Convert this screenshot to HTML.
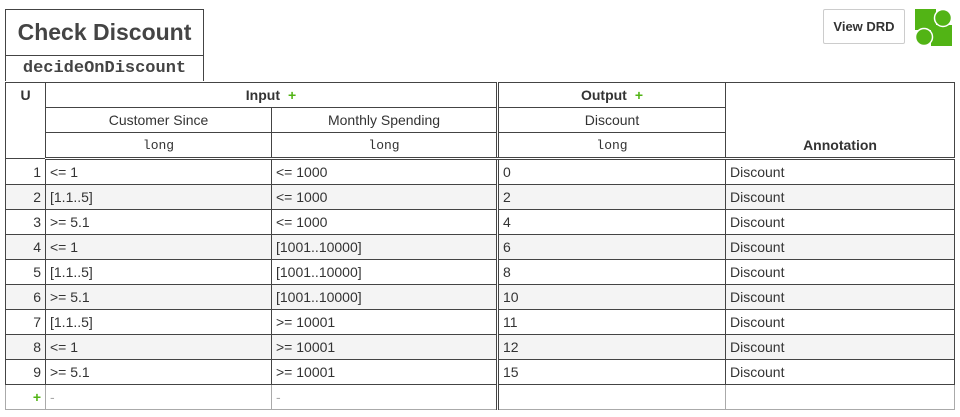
<!DOCTYPE html>
<html><head><style>
body{margin:0;width:960px;height:417px;background:#fff;font-family:"Liberation Sans",sans-serif;color:#333;position:relative;overflow:hidden}
.t1{position:absolute;left:5px;top:9px;width:197px;height:45px;border:1px solid #444;font-weight:bold;font-size:23px;line-height:45px;text-align:center;color:#444}
.t2{position:absolute;left:5px;top:55px;width:197px;height:26px;border:1px solid #444;border-top:none;border-bottom:none;font-family:"Liberation Mono",monospace;font-weight:bold;font-size:17px;line-height:28px;text-align:center;color:#444}
.btn{position:absolute;left:823px;top:9px;width:80px;height:33px;border:1px solid #ccc;border-radius:2px;font-weight:bold;font-size:13px;line-height:33px;text-align:center;color:#333}
table{position:absolute;left:5px;top:82px;width:949px;border-collapse:collapse;table-layout:fixed;font-size:14px}
td,th{border:1px solid #444;height:24px;padding:0 4px;white-space:nowrap;overflow:hidden}
th{font-weight:normal;text-align:center}
.b{font-weight:bold}
.m{font-family:"Liberation Mono",monospace;font-size:13px}
.dl{border-left:3px double #444}
.hb td,.hb th{border-bottom:3px double #444}
tbody tr:nth-child(even) td{background:#f4f4f4}
.n{text-align:right}
.p{color:#52b415;font-weight:bold;margin-left:8px}
.add td{border-color:#aaa;color:#aaa}
</style></head><body>
<div class="t1">Check Discount</div>
<div class="t2">decideOnDiscount</div>
<div class="btn">View DRD</div>
<svg style="position:absolute;left:915px;top:9px" width="37" height="37" viewBox="0 0 37 37">
<rect x="0" y="0" width="21" height="21" fill="#52b415"/>
<rect x="16" y="16" width="21" height="21" fill="#52b415"/>
<circle cx="28" cy="9" r="8.5" fill="#52b415" stroke="#fff" stroke-width="1.5"/>
<circle cx="9" cy="28" r="8.5" fill="#52b415" stroke="#fff" stroke-width="1.5"/>
</svg>
<table>
<colgroup><col style="width:40px"><col style="width:226px"><col style="width:226px"><col style="width:228px"><col style="width:229px"></colgroup>
<thead>
<tr><th rowspan="3" class="b" style="vertical-align:top;padding-top:4px">U</th><th colspan="2" class="b">Input<span class="p">+</span></th><th class="b dl">Output<span class="p">+</span></th><th rowspan="3" class="b" style="vertical-align:bottom;padding-bottom:4px;border-bottom:3px double #444">Annotation</th></tr>
<tr><th>Customer Since</th><th>Monthly Spending</th><th class="dl">Discount</th></tr>
<tr class="hb"><th class="m">long</th><th class="m">long</th><th class="m dl">long</th></tr>
</thead>
<tbody>
<tr><td class="n">1</td><td>&lt;= 1</td><td>&lt;= 1000</td><td class="dl">0</td><td>Discount</td></tr>
<tr><td class="n">2</td><td>[1.1..5]</td><td>&lt;= 1000</td><td class="dl">2</td><td>Discount</td></tr>
<tr><td class="n">3</td><td>&gt;= 5.1</td><td>&lt;= 1000</td><td class="dl">4</td><td>Discount</td></tr>
<tr><td class="n">4</td><td>&lt;= 1</td><td>[1001..10000]</td><td class="dl">6</td><td>Discount</td></tr>
<tr><td class="n">5</td><td>[1.1..5]</td><td>[1001..10000]</td><td class="dl">8</td><td>Discount</td></tr>
<tr><td class="n">6</td><td>&gt;= 5.1</td><td>[1001..10000]</td><td class="dl">10</td><td>Discount</td></tr>
<tr><td class="n">7</td><td>[1.1..5]</td><td>&gt;= 10001</td><td class="dl">11</td><td>Discount</td></tr>
<tr><td class="n">8</td><td>&lt;= 1</td><td>&gt;= 10001</td><td class="dl">12</td><td>Discount</td></tr>
<tr><td class="n">9</td><td>&gt;= 5.1</td><td>&gt;= 10001</td><td class="dl">15</td><td>Discount</td></tr>
<tr class="add"><td class="n" style="background:#fff"><span class="p" style="margin:0">+</span></td><td style="background:#fff">-</td><td style="background:#fff">-</td><td class="dl" style="background:#fff;border-left-color:#444">&nbsp;</td><td style="background:#fff">&nbsp;</td></tr>
</tbody>
</table>
</body></html>
